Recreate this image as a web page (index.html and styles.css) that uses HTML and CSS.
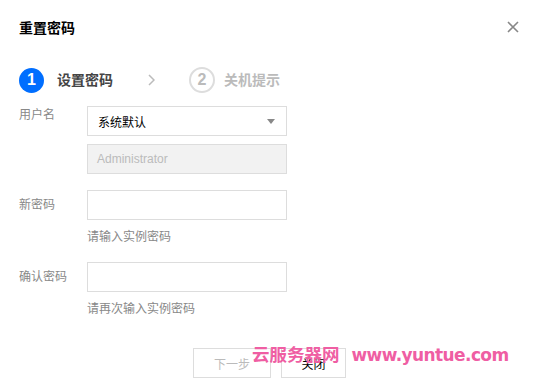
FILE: index.html
```html
<!DOCTYPE html>
<html lang="zh-CN">
<head>
<meta charset="utf-8">
<title>重置密码</title>
<link rel="stylesheet" href="styles.css">
</head>
<body>
<div class="dialog">
  <div class="header">
    <h3 class="title">重置密码</h3>
    <button class="close" aria-label="关闭">
      <svg width="12" height="12" viewBox="0 0 12 12"><path d="M1 1L11 11M11 1L1 11" stroke="#888" stroke-width="1.6" fill="none"/></svg>
    </button>
  </div>
  <div class="steps">
    <div class="step active"><span class="num">1</span><span class="step-text">设置密码</span></div>
    <svg class="chev" width="7" height="12" viewBox="0 0 7 12"><path d="M1 1L6 6L1 11" stroke="#bbb" stroke-width="1.5" fill="none"/></svg>
    <div class="step"><span class="num">2</span><span class="step-text">关机提示</span></div>
  </div>
  <div class="form">
    <div class="row">
      <label class="label label-top">用户名</label>
      <div class="controls">
        <div class="select"><span>系统默认</span><span class="caret"></span></div>
        <div class="input disabled">Administrator</div>
      </div>
    </div>
    <div class="row">
      <label class="label">新密码</label>
      <div class="controls">
        <div class="input"></div>
        <div class="hint">请输入实例密码</div>
      </div>
    </div>
    <div class="row">
      <label class="label">确认密码</label>
      <div class="controls">
        <div class="input"></div>
        <div class="hint">请再次输入实例密码</div>
      </div>
    </div>
  </div>
  <div class="footer">
    <button class="btn btn-disabled">下一步</button>
    <button class="btn">关闭</button>
  </div>
  <div class="watermark"><span class="wm-cn">云服务器网</span><span class="wm-url">www.yuntue.com</span></div>
</div>
</body>
</html>
```
FILE: styles.css
```css
* { box-sizing: border-box; }
html, body { margin: 0; padding: 0; background: #fff; }
body {
  font-family: "Liberation Sans", "Noto Sans CJK SC", sans-serif;
  font-size: 12px;
  color: #000;
}
.dialog {
  position: relative;
  width: 537px;
  height: 392px;
  padding: 0 18px 0 19px;
}
.header {
  display: flex;
  justify-content: space-between;
  align-items: center;
  padding-top: 18px;
  height: 38px;
}
.title {
  margin: 0;
  font-size: 14px;
  line-height: 20px;
  font-weight: bold;
  color: #000;
}
.close {
  border: 0;
  background: none;
  padding: 0;
  width: 12px;
  height: 12px;
  display: flex;
  margin-top: -2px;
}
.steps {
  display: flex;
  align-items: center;
  margin-top: 29px;
  height: 26px;
}
.step {
  display: flex;
  align-items: center;
}
.num {
  width: 26px;
  height: 26px;
  border-radius: 50%;
  border: 2px solid #ddd;
  color: #bbb;
  font-size: 16px;
  font-weight: bold;
  display: flex;
  align-items: center;
  justify-content: center;
}
.step.active .num {
  width: 25px;
  height: 25px;
  border: 0;
  background: #006eff;
  color: #fff;
}
.step-text {
  font-size: 14px;
  font-weight: bold;
  color: #bbb;
  margin-left: 9px;
  line-height: 20px;
}
.step.active .step-text {
  color: #444;
  margin-left: 13px;
}
.chev {
  margin: 0 34px 0 35px;
}
.form {
  margin-top: 13px;
  display: flex;
  flex-direction: column;
  gap: 16px;
}
.row {
  display: flex;
}
.label {
  width: 68px;
  color: #888;
  line-height: 30px;
}
.label-top {
  line-height: 18px;
}
.controls {
  display: flex;
  flex-direction: column;
  gap: 8px;
  width: 200px;
}
.select, .input {
  height: 30px;
  border: 1px solid #ddd;
  background: #fff;
  padding: 0 10px;
  display: flex;
  align-items: center;
  color: #000;
}
.select {
  justify-content: space-between;
  padding-right: 11px;
}
.caret {
  width: 0;
  height: 0;
  border-left: 4px solid transparent;
  border-right: 4px solid transparent;
  border-top: 5px solid #888;
}
.input.disabled {
  background: #f2f2f2;
  color: #bbb;
  padding-left: 9px;
}
.hint {
  color: #888;
  line-height: 18px;
}
.footer {
  display: flex;
  justify-content: center;
  gap: 10px;
  margin-top: 30px;
  padding-left: 1px;
}
.btn {
  height: 30px;
  border: 1px solid #ddd;
  background: #fff;
  font-family: inherit;
  font-size: 12px;
  color: #000;
  padding: 0;
  width: 65px;
}
.btn-disabled {
  width: 78px;
  color: #bbb;
}
.watermark {
  position: absolute;
  left: 252px;
  top: 342px;
  display: flex;
  align-items: baseline;
  color: #ef5ea3;
  font-weight: bold;
  white-space: nowrap;
}
.wm-cn {
  font-family: "Noto Sans CJK SC", sans-serif;
  font-size: 17.5px;
  line-height: 24px;
}
.wm-url {
  font-family: "DejaVu Sans", sans-serif;
  font-size: 17px;
  margin-left: 12px;
  letter-spacing: -0.6px;
}
```
